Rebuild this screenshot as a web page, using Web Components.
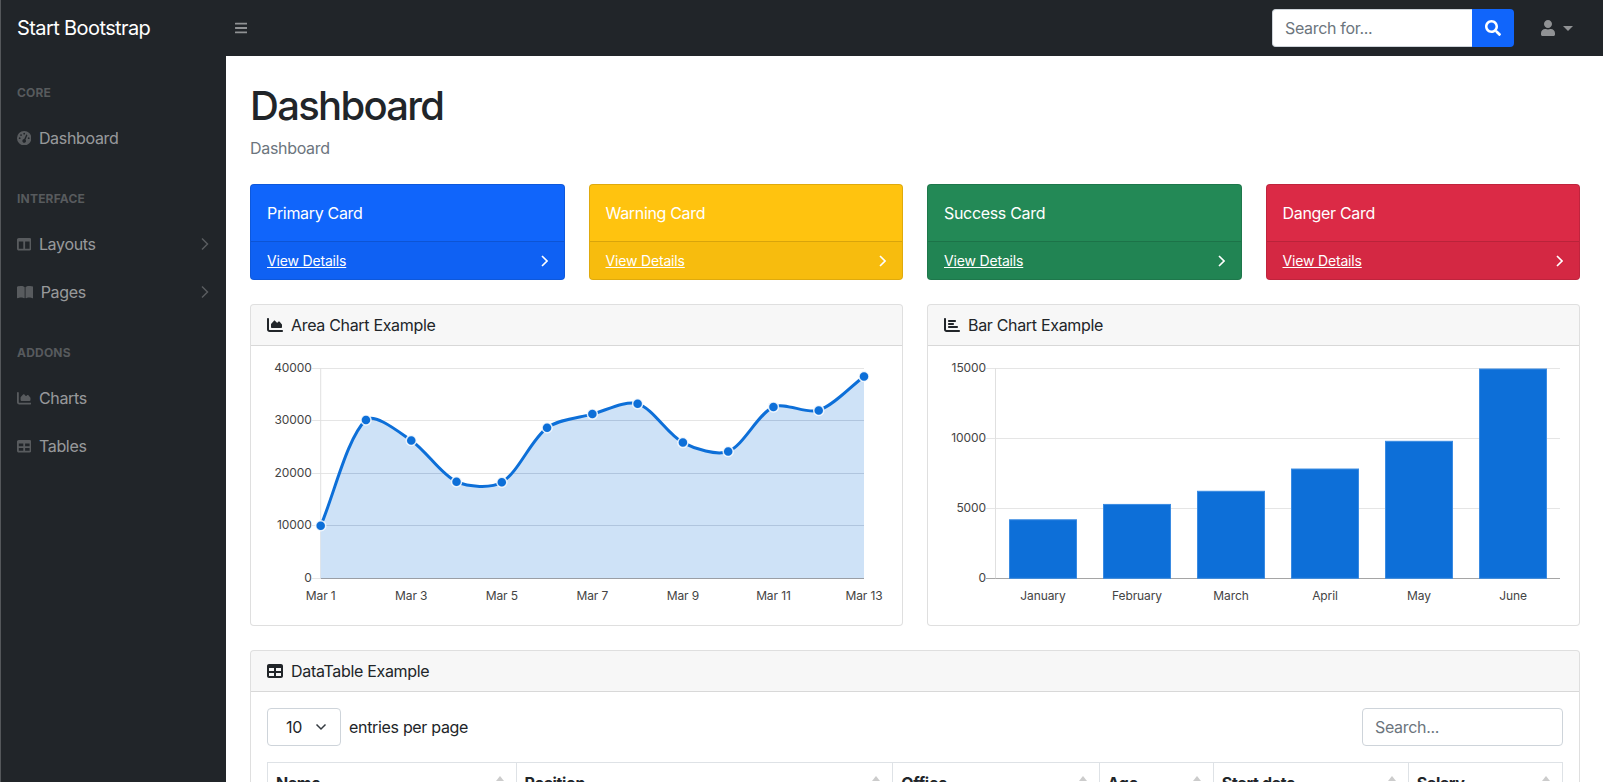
<!DOCTYPE html>
<html lang="en">
<head>
<meta charset="utf-8">
<title>Dashboard - SB Admin</title>
<style>
  html, body { height: 100%; margin: 0; overflow: hidden; }
  body {
    font-family: Inter, "Liberation Sans", sans-serif;
    font-size: 16px;
    line-height: 1.5;
    letter-spacing: -0.32px;
    color: #212529;
    background: #fff;
  }
</style>
</head>
<body>
<sb-layout>
  <sb-topnav slot="top" brand="Start Bootstrap"></sb-topnav>
  <sb-sidenav slot="side">
    <sb-nav-heading>Core</sb-nav-heading>
    <sb-nav-link icon="gauge">Dashboard</sb-nav-link>
    <sb-nav-heading>Interface</sb-nav-heading>
    <sb-nav-link icon="columns" arrow>Layouts</sb-nav-link>
    <sb-nav-link icon="book" arrow>Pages</sb-nav-link>
    <sb-nav-heading>Addons</sb-nav-heading>
    <sb-nav-link icon="area">Charts</sb-nav-link>
    <sb-nav-link icon="table">Tables</sb-nav-link>
  </sb-sidenav>
  <sb-page-title crumb="Dashboard">Dashboard</sb-page-title>
  <sb-card-row>
    <sb-stat-card color="#1065fb">Primary Card</sb-stat-card>
    <sb-stat-card color="#ffc30f">Warning Card</sb-stat-card>
    <sb-stat-card color="#238956">Success Card</sb-stat-card>
    <sb-stat-card color="#db2a46">Danger Card</sb-stat-card>
  </sb-card-row>
  <sb-chart-row>
    <sb-card icon="area" heading="Area Chart Example"><sb-area-chart></sb-area-chart></sb-card>
    <sb-card icon="bar" heading="Bar Chart Example"><sb-bar-chart></sb-bar-chart></sb-card>
  </sb-chart-row>
  <sb-card icon="table" heading="DataTable Example"><sb-datatable></sb-datatable></sb-card>
</sb-layout>

<script>
// font awesome shapes, viewBox width then path
const ICONS = {
  bars: [448, 'M16 132h416c8.837 0 16-7.163 16-16V76c0-8.837-7.163-16-16-16H16C7.163 60 0 67.163 0 76v40c0 8.837 7.163 16 16 16zm0 160h416c8.837 0 16-7.163 16-16v-40c0-8.837-7.163-16-16-16H16c-8.837 0-16 7.163-16 16v40c0 8.837 7.163 16 16 16zm0 160h416c8.837 0 16-7.163 16-16v-40c0-8.837-7.163-16-16-16H16c-8.837 0-16 7.163-16 16v40c0 8.837 7.163 16 16 16z'],
  search: [512, 'M505 442.7L405.3 343c-4.5-4.5-10.6-7-17-7H372c27.6-35.3 44-79.7 44-128C416 93.1 322.9 0 208 0S0 93.1 0 208s93.1 208 208 208c48.3 0 92.7-16.4 128-44v16.3c0 6.4 2.5 12.5 7 17l99.7 99.7c9.4 9.4 24.6 9.4 33.9 0l28.3-28.3c9.4-9.4 9.4-24.6.1-34zM208 336c-70.7 0-128-57.2-128-128 0-70.7 57.2-128 128-128 70.7 0 128 57.2 128 128 0 70.7-57.2 128-128 128z'],
  user: [448, 'M224 256c70.7 0 128-57.3 128-128S294.7 0 224 0 96 57.3 96 128s57.3 128 128 128zm89.6 32h-16.7c-22.2 10.2-46.9 16-72.9 16s-50.6-5.8-72.9-16h-16.7C60.2 288 0 348.2 0 422.4V464c0 26.5 21.5 48 48 48h352c26.5 0 48-21.5 48-48v-41.6c0-74.2-60.2-134.4-134.4-134.4z'],
  gauge: [512, 'M0 256a256 256 0 1 1 512 0A256 256 0 1 1 0 256zM288 96a32 32 0 1 0 -64 0 32 32 0 1 0 64 0zM256 416c35.3 0 64-28.7 64-64c0-17.4-6.9-33.1-18.1-44.6L366 161.7c5.3-12.1-.2-26.3-12.3-31.6s-26.3 .2-31.6 12.3L257.9 288c-.6 0-1.3 0-1.9 0c-35.3 0-64 28.7-64 64s28.7 64 64 64zM176 144a32 32 0 1 0 -64 0 32 32 0 1 0 64 0zM96 288a32 32 0 1 0 0-64 32 32 0 1 0 0 64zm352-32a32 32 0 1 0 -64 0 32 32 0 1 0 64 0z'],
  columns: [512, 'M0 96C0 60.7 28.7 32 64 32H448c35.3 0 64 28.7 64 64V416c0 35.3-28.7 64-64 64H64c-35.3 0-64-28.7-64-64V96zm64 64V416H224V160H64zm384 0H288V416H448V160z'],
  book: [576, 'M249.6 471.5c10.8 3.8 22.4-4.1 22.4-15.5V78.6c0-4.2-1.6-8.4-5-11C247.4 52 202.4 32 144 32C93.5 32 46.3 41.3 18.1 50.1C7.3 53.5 0 63.6 0 74.9V456c0 11 10.8 18.7 21.5 15.7C46.3 465.1 93.5 448 144 448c50.9 0 92.6 12.5 105.6 23.5zm76.8 0C339.4 460.5 381.1 448 432 448c50.5 0 97.7 17.1 122.5 23.7c10.7 3 21.5-4.7 21.5-15.7V74.9c0-11.3-7.3-21.4-18.1-24.8C529.7 41.3 482.5 32 432 32c-58.4 0-103.4 20-123 35.6c-3.4 2.6-5 6.8-5 11V456c0 11.4 11.7 19.3 22.4 15.5z'],
  area: [512, 'M64 64c0-17.7-14.3-32-32-32S0 46.3 0 64V400c0 44.2 35.8 80 80 80H480c17.7 0 32-14.3 32-32s-14.3-32-32-32H80c-8.8 0-16-7.2-16-16V64zm96 288H448c17.7 0 32-14.3 32-32V251.8c0-7.6-2.7-15-7.7-20.8l-65.8-76.8c-12.1-14.2-33.7-15-46.9-1.8l-21 21c-10 10-26.4 9.2-35.4-1.6l-39.2-47c-12.6-15.1-35.7-15.4-48.7-.6L135.9 215c-5.1 5.8-7.9 13.3-7.9 21.1v84c0 17.7 14.3 32 32 32z'],
  bar: [512, 'M32 32c17.7 0 32 14.3 32 32V400c0 8.8 7.2 16 16 16H480c17.7 0 32 14.3 32 32s-14.3 32-32 32H80c-44.2 0-80-35.8-80-80V64C0 46.3 14.3 32 32 32zm96 96c0-17.7 14.3-32 32-32l192 0c17.7 0 32 14.3 32 32s-14.3 32-32 32l-192 0c-17.7 0-32-14.3-32-32zm32 64H288c17.7 0 32 14.3 32 32s-14.3 32-32 32H160c-17.7 0-32-14.3-32-32s14.3-32 32-32zm0 96H416c17.7 0 32 14.3 32 32s-14.3 32-32 32H160c-17.7 0-32-14.3-32-32s14.3-32 32-32z'],
  table: [512, 'M64 256V160H224v96H64zm0 64H224v96H64V320zm224 96V320H448v96H288zM448 256H288V160H448v96zM64 32C28.7 32 0 60.7 0 96V416c0 35.3 28.7 64 64 64H448c35.3 0 64-28.7 64-64V96c0-35.3-28.7-64-64-64H64z']
};

function icon(name, size) {
  const [w, d] = ICONS[name];
  const width = size * w / 512;
  return `<svg viewBox="0 0 ${w} 512" width="${width}" height="${size}" fill="currentColor" aria-hidden="true"><path d="${d}"/></svg>`;
}

const CHEVRON = '<svg viewBox="0 0 8 14" width="8" height="14" fill="none" stroke="currentColor" stroke-width="1.5" aria-hidden="true"><path d="M1 1.5 6.5 7 1 12.5"/></svg>';
const CHEVRON_SM = '<svg viewBox="0 0 7 12" width="7" height="12" fill="none" stroke="currentColor" stroke-width="1.6" aria-hidden="true"><path d="M1 1 6 6 1 11"/></svg>';

class Base extends HTMLElement {
  constructor() {
    super();
    this.attachShadow({ mode: 'open' });
  }
  connectedCallback() {
    this.shadowRoot.innerHTML = this.render();
  }
}

class SbLayout extends Base {
  render() {
    return `<style>
      :host { display: grid; grid-template-columns: 226px 1fr; grid-template-rows: 56px 1fr; height: 100vh; overflow: hidden; }
      .top { grid-column: 1 / 3; }
      main { padding: 0 23px 0 24px; overflow: hidden; background: #fff; }
    </style>
    <div class="top"><slot name="top"></slot></div>
    <slot name="side"></slot>
    <main><slot></slot></main>`;
  }
}

class SbTopnav extends Base {
  render() {
    return `<style>
      :host { display: flex; align-items: center; height: 56px; background: #212529; box-shadow: inset 1px 0 0 #54575a; }
      .brand { width: 226px; padding-left: 17px; box-sizing: border-box; font-size: 20px; letter-spacing: -0.6px; color: #fff; white-space: nowrap; }
      .toggle { display: flex; margin-left: 9px; color: rgba(255,255,255,.5); }
      .search { display: flex; margin-left: auto; height: 38px; }
      input {
        width: 200px; box-sizing: border-box; border: 1px solid #ced4da; border-right: 0; border-radius: 4px 0 0 4px;
        padding: 6px 12px; font: inherit; letter-spacing: inherit; color: #212529; outline: none;
      }
      input::placeholder { color: #6c757d; opacity: 1; }
      .go { width: 42px; display: flex; align-items: center; justify-content: center; background: #1065fb; color: #fff; border-radius: 0 4px 4px 0; }
      .user { display: flex; align-items: center; gap: 8px; margin: 0 30px 0 27px; color: rgba(255,255,255,.5); }
      .caret { width: 0; height: 0; border: 5px solid transparent; border-top-color: currentColor; border-bottom: 0; }
    </style>
    <div class="brand">${this.getAttribute('brand')}</div>
    <div class="toggle">${icon('bars', 14)}</div>
    <div class="search">
      <input placeholder="Search for..." aria-label="Search for...">
      <div class="go">${icon('search', 16)}</div>
    </div>
    <div class="user">${icon('user', 16)}<span class="caret"></span></div>`;
  }
}

class SbSidenav extends Base {
  render() {
    return `<style>
      :host { display: block; background: #212529; box-shadow: inset 1px 0 0 #54575a; overflow: hidden; }
    </style><slot></slot>`;
  }
}

class SbNavHeading extends Base {
  render() {
    return `<style>
      :host { display: block; padding: 28px 17px 12px; font-size: 12px; line-height: 18px; font-weight: 700; letter-spacing: .2px; text-transform: uppercase; color: rgba(255,255,255,.25); }
    </style><slot></slot>`;
  }
}

class SbNavLink extends Base {
  render() {
    return `<style>
      :host { display: flex; align-items: center; height: 48px; padding: 0 17px; color: rgba(255,255,255,.55); }
      .ico { display: flex; margin-right: 7.5px; color: rgba(255,255,255,.25); }
      .arrow { display: flex; margin-left: auto; color: rgba(255,255,255,.25); }
    </style>
    <span class="ico">${icon(this.getAttribute('icon'), 14.4)}</span>
    <slot></slot>
    ${this.hasAttribute('arrow') ? `<span class="arrow">${CHEVRON}</span>` : ''}`;
  }
}

class SbPageTitle extends Base {
  render() {
    return `<style>
      :host { display: block; padding-top: 26px; margin-bottom: 24px; }
      h1 { margin: 0 0 6px; font-size: 40px; line-height: 48px; font-weight: 500; letter-spacing: -1.7px; color: #212529; }
      div { color: #6c757d; line-height: 24px; }
    </style>
    <h1><slot></slot></h1>
    <div>${this.getAttribute('crumb')}</div>`;
  }
}

class SbCardRow extends Base {
  render() {
    return `<style>
      :host { display: grid; grid-template-columns: repeat(4, 1fr); gap: 24px; margin-bottom: 24px; }
    </style><slot></slot>`;
  }
}

class SbChartRow extends Base {
  render() {
    return `<style>
      :host { display: grid; grid-template-columns: repeat(2, 1fr); gap: 24px; margin-bottom: 24px; }
    </style><slot></slot>`;
  }
}

class SbStatCard extends Base {
  render() {
    return `<style>
      :host { display: block; border: 1px solid rgba(0,0,0,.125); border-radius: 4px; color: #fff; overflow: hidden; background: ${this.getAttribute('color')}; height: 96px; box-sizing: border-box; }
      .body { padding: 16px; line-height: 24px; }
      .foot { display: flex; align-items: center; justify-content: space-between; padding: 8px 16px; font-size: 14px; line-height: 21px; letter-spacing: -0.17px; background: rgba(0,0,0,.03); border-top: 1px solid rgba(0,0,0,.125); }
      a { color: #fff; text-decoration: underline; }
      .chev { display: flex; }
    </style>
    <div class="body"><slot></slot></div>
    <div class="foot"><a href="#">View Details</a><span class="chev">${CHEVRON_SM}</span></div>`;
  }
}

class SbCard extends Base {
  render() {
    return `<style>
      :host { display: block; border: 1px solid rgba(0,0,0,.125); border-radius: 4px; background: #fff; }
      header { display: flex; align-items: center; padding: 8px 16px; line-height: 24px; background: rgba(0,0,0,.03); border-bottom: 1px solid rgba(0,0,0,.125); border-radius: 3px 3px 0 0; }
      .ico { width: 20px; display: flex; justify-content: flex-start; margin-right: 4px; }
      .body { padding: 16px; }
    </style>
    <header><span class="ico">${icon(this.getAttribute('icon'), 16)}</span>${this.getAttribute('heading')}</header>
    <div class="body"><slot></slot></div>`;
  }
}

const CHART_STYLE = `<style>
  :host { display: block; height: 247px; }
  svg { display: block; width: 100%; height: 247px; overflow: visible; }
  text { font-family: Inter, "Liberation Sans", sans-serif; font-size: 12px; letter-spacing: -0.1px; fill: #444; }
</style>`;

// same tension maths as chart.js so the curve falls where the reference has it
function splinePath(pts, t) {
  const cps = pts.map((p, i) => {
    const a = pts[i - 1] || p;
    const b = pts[i + 1] || p;
    const d01 = Math.hypot(p.x - a.x, p.y - a.y);
    const d12 = Math.hypot(b.x - p.x, b.y - p.y);
    const sum = d01 + d12 || 1;
    const fa = t * d01 / sum;
    const fb = t * d12 / sum;
    return {
      px: p.x - fa * (b.x - a.x), py: p.y - fa * (b.y - a.y),
      nx: p.x + fb * (b.x - a.x), ny: p.y + fb * (b.y - a.y)
    };
  });
  let d = `M${pts[0].x} ${pts[0].y}`;
  for (let i = 1; i < pts.length; i++) {
    d += `C${cps[i - 1].nx} ${cps[i - 1].ny} ${cps[i].px} ${cps[i].py} ${pts[i].x} ${pts[i].y}`;
  }
  return d;
}

class SbAreaChart extends Base {
  render() {
    const data = [10000, 30162, 26263, 18394, 18287, 28682, 31274, 33259, 25849, 24159, 32651, 31984, 38451];
    const left = 53.7, right = 597, top = 6.3, bottom = 216.3;
    const step = (right - left) / 12;
    const y = v => bottom - v / 40000 * (bottom - top);
    const pts = data.map((v, i) => ({ x: left + i * step, y: y(v) }));
    const line = splinePath(pts, 0.3);
    const ticks = [40000, 30000, 20000, 10000, 0];
    let grid = '', gridOver = '', labels = '';
    ticks.forEach(v => {
      const gy = Math.floor(y(v)) + .5;
      grid += `<line x1="${left - 9}" x2="${right}" y1="${gy}" y2="${gy}" stroke="#e5e5e5"/>`;
      gridOver += `<line x1="${left}" x2="${right}" y1="${gy}" y2="${gy}" stroke="${v ? '#b0c5de' : '#9a9ea5'}"/>`;
      labels += `<text x="${left - 9}" y="${gy + 3.5}" text-anchor="end">${v}</text>`;
    });
    data.forEach((_, i) => {
      if (i % 2 === 0) labels += `<text x="${left + i * step}" y="238" text-anchor="middle">Mar ${i + 1}</text>`;
    });
    const dots = pts.map(p => `<circle cx="${p.x}" cy="${p.y}" r="5" fill="#0d6fd8" stroke="rgba(255,255,255,.85)" stroke-width="1.5"/>`).join('');
    return `${CHART_STYLE}
    <svg role="img" aria-label="Area chart">
      ${grid}
      <line x1="${left}" x2="${left}" y1="${top}" y2="${bottom}" stroke="#e0e0e0"/>
      <path d="${line}L${right} ${bottom}L${left} ${bottom}Z" fill="#cee2f7"/>
      <clipPath id="fill"><path d="${line}L${right} ${bottom + 1}L${left} ${bottom + 1}Z"/></clipPath>
      <g clip-path="url(#fill)">${gridOver}</g>
      <path d="${line}" fill="none" stroke="#0d6fd8" stroke-width="3"/>
      ${dots}
      ${labels}
    </svg>`;
  }
}

class SbBarChart extends Base {
  render() {
    const data = [['January', 4215], ['February', 5312], ['March', 6251], ['April', 7841], ['May', 9821], ['June', 14984]];
    const left = 52, step = 94, width = 68, top = 6.3, bottom = 216.3;
    const right = left + step * 6;
    const y = v => bottom - v / 15000 * (bottom - top);
    let out = '';
    [15000, 10000, 5000, 0].forEach(v => {
      const gy = Math.floor(y(v)) + .5;
      out += `<line x1="${left - 10}" x2="${right}" y1="${gy}" y2="${gy}" stroke="${v ? '#e5e5e5' : '#a5a5a5'}"/>`;
      out += `<text x="${left - 10}" y="${gy + 3.5}" text-anchor="end">${v}</text>`;
    });
    out += `<line x1="${left - .5}" x2="${left - .5}" y1="${top}" y2="${bottom}" stroke="#e0e0e0"/>`;
    data.forEach(([name, v], i) => {
      const cx = left + step * (i + .5);
      out += `<rect x="${cx - width / 2 + .5}" y="${y(v) + .5}" width="${width - 1}" height="${bottom - y(v) - .5}" fill="#0d6fd8" stroke="#3a8be2"/>`;
      out += `<text x="${cx}" y="238" text-anchor="middle">${name}</text>`;
    });
    return `${CHART_STYLE}<svg role="img" aria-label="Bar chart">${out}</svg>`;
  }
}

class SbDatatable extends Base {
  render() {
    const cols = [['Name', 248.5], ['Position', 376.8], ['Office', 206.3], ['Age', 114.15], ['Start date', 195], ['Salary', 153.25]];
    const cells = cols.map(([c]) => `<div class="th">${c}<i></i></div>`).join('');
    return `<style>
      :host { display: block; }
      .bar { display: flex; justify-content: space-between; align-items: center; margin-bottom: 16px; }
      .len { display: flex; align-items: center; gap: 8px; }
      .select {
        display: flex; align-items: center; justify-content: space-between; box-sizing: border-box; width: 74px; height: 38px;
        padding: 0 13px 0 18px; border: 1px solid #ced4da; border-radius: 4px;
      }
      input {
        box-sizing: border-box; width: 201px; height: 38px; padding: 6px 12px; border: 1px solid #ced4da; border-radius: 4px;
        font: inherit; letter-spacing: inherit; outline: none;
      }
      input::placeholder { color: #6c757d; opacity: 1; }
      .head {
        display: grid; grid-template-columns: ${cols.map(c => c[1] + 'fr').join(' ')};
        border: 1px solid #dee2e6; border-bottom: 0; font-weight: 700;
      }
      .th { position: relative; padding: 8px; border-right: 1px solid #dee2e6; line-height: 24px; }
      .th:last-child { border-right: 0; }
      i {
        position: absolute; top: 13px; right: 12px; width: 0; height: 0;
        border: 4px solid transparent; border-top: 0; border-bottom: 5px solid #ccc;
      }
    </style>
    <div class="bar">
      <div class="len">
        <div class="select">10<svg width="12" height="8" viewBox="0 0 12 8" fill="none" stroke="#343a40" stroke-width="1.5" aria-hidden="true"><path d="M1.5 1.5 6 6l4.5-4.5"/></svg></div>
        <span>entries per page</span>
      </div>
      <input placeholder="Search..." aria-label="Search...">
    </div>
    <div class="head">${cells}</div>`;
  }
}

customElements.define('sb-layout', SbLayout);
customElements.define('sb-topnav', SbTopnav);
customElements.define('sb-sidenav', SbSidenav);
customElements.define('sb-nav-heading', SbNavHeading);
customElements.define('sb-nav-link', SbNavLink);
customElements.define('sb-page-title', SbPageTitle);
customElements.define('sb-card-row', SbCardRow);
customElements.define('sb-chart-row', SbChartRow);
customElements.define('sb-stat-card', SbStatCard);
customElements.define('sb-card', SbCard);
customElements.define('sb-area-chart', SbAreaChart);
customElements.define('sb-bar-chart', SbBarChart);
customElements.define('sb-datatable', SbDatatable);
</script>
</body>
</html>
